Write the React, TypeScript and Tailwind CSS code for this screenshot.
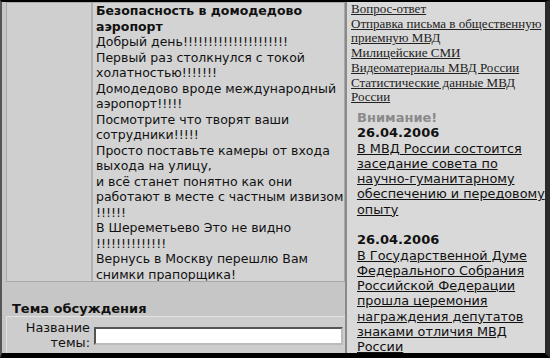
export default function App() {
  const sans = { fontFamily: '"DejaVu Sans", Verdana, sans-serif' };
  return (
    <div className="w-[550px] h-[358px] flex bg-[#c6c6c6] border-t-2 border-b-[5px] border-r-[5px] border-l-2 border-t-black border-b-black border-r-[#2a2a2a] border-l-[#555] overflow-hidden text-[#111]" style={sans}>
      {/* левая часть: сообщение и форма */}
      <div className="w-[343px] shrink-0 flex flex-col pl-[4px]">
        <div className="flex border border-[#a9a9a9] h-[280px]">
          <div className="w-[86px] shrink-0 bg-[#cfcfcf] border-r-2 border-[#b0b0b0]"></div>
          <div className="flex-1 bg-[#d3d3d3] pl-[3px] text-[12.5px] leading-[15.5px] overflow-hidden">
            <div className="font-bold">Безопасность в домодедово аэропорт</div>
            <div>Добрый день!!!!!!!!!!!!!!!!!!!!!</div>
            <div>Первый раз столкнулся с токой холатностью!!!!!!!</div>
            <div>Домодедово вроде международный аэропорт!!!!!</div>
            <div>Посмотрите что творят ваши сотрудники!!!!!</div>
            <div>Просто поставьте камеры от входа выхода на улицу,</div>
            <div>и всё станет понятно как они работают в месте с частным извизом !!!!!!</div>
            <div>В Шереметьево Это не видно !!!!!!!!!!!!!!</div>
            <div>Вернусь в Москву перешлю Вам снимки прапорщика!</div>
          </div>
        </div>
        <div className="mt-[19px] pl-[6px] font-bold text-[13px] leading-[15px]">Тема обсуждения</div>
        <div className="flex-1 border-t border-l border-[#e2e2e2] bg-[#cdcdcd] flex items-start pt-[3px]">
          <div className="w-[87px] shrink-0 text-right text-[12.8px] leading-[15px] pr-[4px]">
            Название<br />темы:
          </div>
          <div className="flex-1 pt-[4px] pr-[2px]">
            <input type="text" className="w-full h-[18px] bg-white border-2 border-t-[#555] border-l-[#555] border-b-[#bbb] border-r-[#bbb] outline-none" />
          </div>
        </div>
      </div>

      {/* правая колонка */}
      <div className="flex-1 bg-[#d9d9d9] border-l-2 border-[#8a8a8a] pl-[4px] overflow-hidden">
        <div className="text-[13px] leading-[14.7px] text-[#222]" style={{ fontFamily: '"Liberation Serif", "Times New Roman", serif' }}>
          <div><a className="underline">Вопрос-ответ</a></div>
          <div><a className="underline">Отправка письма в общественную приемную МВД</a></div>
          <div><a className="underline">Милицейские СМИ</a></div>
          <div><a className="underline">Видеоматериалы МВД России</a></div>
          <div><a className="underline">Статистические данные МВД России</a></div>
        </div>
        <div className="mt-[5px] pl-[6px] text-[12.8px] leading-[15.3px]">
          <div className="font-bold text-[#8a8a8a] text-[13px]">Внимание!</div>
          <div className="font-bold text-[13px]">26.04.2006</div>
          <div><a className="underline">В МВД России состоится заседание совета по научно-гуманитарному обеспечению и передовому опыту</a></div>
          <div className="mt-[15.3px] font-bold text-[13px]">26.04.2006</div>
          <div><a className="underline">В Государственной Думе Федерального Собрания Российской Федерации прошла церемония награждения депутатов знаками отличия МВД России</a></div>
        </div>
      </div>
    </div>
  );
}
